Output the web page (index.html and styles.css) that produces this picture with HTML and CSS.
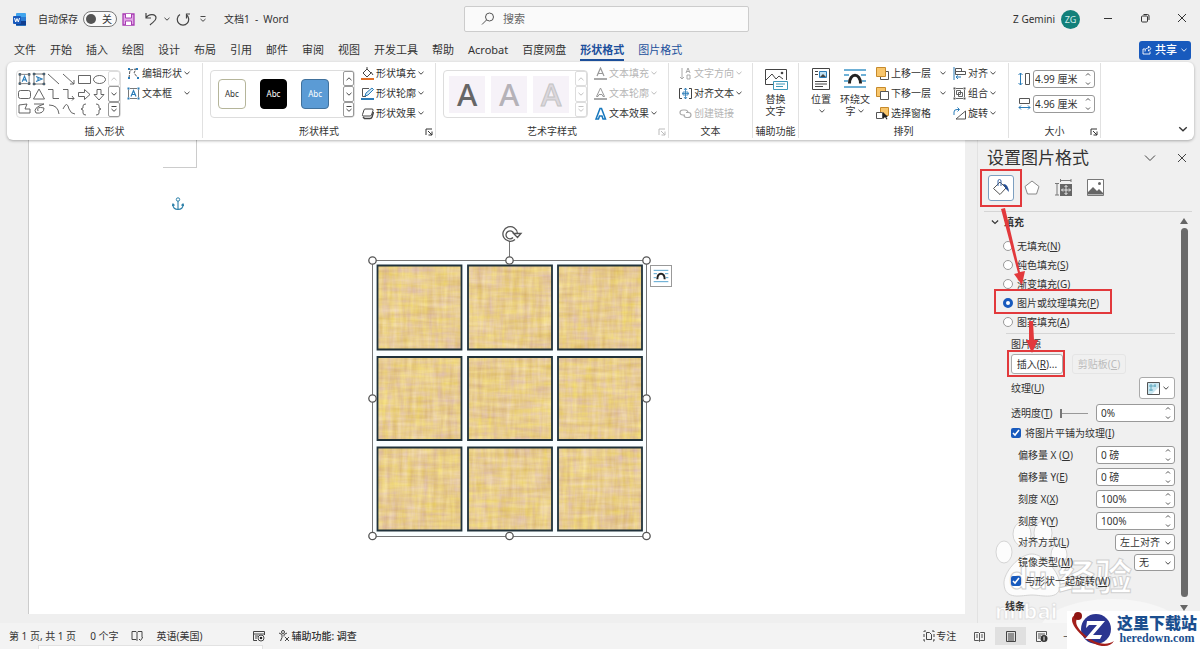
FILE: index.html
```html
<!DOCTYPE html>
<html lang="zh-CN">
<head>
  <meta charset="UTF-8">
  <meta name="viewport" content="width=device-width, initial-scale=1.0">
  <title>文档1 - Word</title>
  <link rel="stylesheet" href="styles.css">
</head>
<body>
  <!-- shared icons -->
  <svg class="defs" width="0" height="0">
    <symbol id="chev" viewBox="0 0 8 8"><path d="M1.5 2.800L4 5.200l2.500-2.400" fill="none" stroke="currentColor" stroke-width=".9"/></symbol>
    <symbol id="chev-up" viewBox="0 0 8 8"><path d="M1.500 5.200L4 2.800l2.500 2.400" fill="none" stroke="currentColor" stroke-width=".9"/></symbol>
    <symbol id="chev-bar" viewBox="0 0 8 8"><path d="M1.500 1.500h5M1.500 4L4 6.300 6.500 4" fill="none" stroke="currentColor" stroke-width=".9"/></symbol>
    <symbol id="launch" viewBox="0 0 8 8"><path d="M1 7V1h6M3 3l4 4M7 3.500V7H3.500" fill="none" stroke="currentColor"/></symbol>
    <symbol id="updown" viewBox="0 0 8 16"><path d="M2 4.500l2-2 2 2M2 11.500l2 2 2-2" fill="none" stroke="#555"/></symbol>
    <symbol id="textbox" viewBox="0 0 13 13"><path d="M1.500 2.500v8M11.500 2.500v8M3 1.500h7M3 11.500h7" stroke="#555" fill="none" stroke-width=".8"/><path d="M.5.500h2v2h-2zM10.500.500h2v2h-2zM.5 10.500h2v2h-2zM10.500 10.500h2v2h-2z" fill="#2b7cb8"/><path d="M4 9.500L6.500 3.500 9 9.500M5 7.500h3" stroke="#2b7cb8" stroke-width="1.200" fill="none"/></symbol>
    <symbol id="wrap" viewBox="0 0 24 20"><path d="M1 1.500h22M1 6.500h5M18 6.500h5M1 12.500h4M19 12.500h4M1 18.500h22" stroke="#3f97c9" stroke-width="1.300"/><path d="M6.500 15c0-11 11-11 11 0" stroke="#222" stroke-width="3" fill="none"/></symbol>
  </svg>

  <header class="titlebar">
    <div class="title-left">
      <svg class="word" width="13" height="13" viewBox="0 0 13 13"><rect x="3" width="10" height="13" rx="1" fill="#41a5ee"/><path d="M3 4h10v4H3z" fill="#2b7cd3"/><path d="M3 8h10v4.500H3z" fill="#103f91"/><rect y="3" width="8" height="8" rx="1" fill="#185abd"/><path d="M1.500 5l1.200 4L4 5.500 5.300 9l1.200-4" stroke="#fff" fill="none"/></svg>
      <span>自动保存</span>
      <button class="toggle" type="button"><i></i>关</button>
      <svg width="13" height="13" viewBox="0 0 13 13"><path d="M1 1h11v11H1z" fill="#e3a9e8" stroke="#a83cb3" stroke-width="1.300"/><path d="M3.500 1v4h6V1M3.500 12V8h6v4" fill="#fff" stroke="#a83cb3"/></svg>
      <svg class="undo" width="14" height="14" viewBox="0 0 14 14"><path d="M2 1v5h5M2 6c3-5 10-4 10 0 0 3-3 4-6 7" fill="none" stroke="#444" stroke-width="1.200"/></svg>
      <svg width="8" height="8"><use href="#chev"/></svg>
      <svg width="14" height="14" viewBox="0 0 14 14"><path d="M4 2.500a5.700 5.700 0 1 0 6 0M3.500 6.500V2H-1" fill="none" stroke="#444" stroke-width="1.200" transform="translate(14 0) scale(-1 1)"/></svg>
      <svg class="quick" width="8" height="8"><use href="#chev-bar"/></svg>
      <span class="doc-name">文档1&nbsp; -&nbsp; Word</span>
    </div>
    <label class="search">
      <svg width="14" height="14" viewBox="0 0 14 14"><circle cx="8.500" cy="5" r="4" fill="none" stroke="#555"/><path d="M5.500 8L1 12.500" stroke="#555"/></svg>
      <input type="text" placeholder="搜索" aria-label="搜索">
    </label>
    <div class="title-right">
      <span>Z Gemini</span>
      <span class="avatar">ZG</span>
      <button type="button" aria-label="最小化"><svg width="10" height="10" viewBox="0 0 10 10"><path d="M1 5.500h8" stroke="#333"/></svg></button>
      <button type="button" aria-label="还原"><svg width="10" height="10" viewBox="0 0 10 10"><rect x="1.500" y="3" width="6" height="6" rx="1" fill="none" stroke="#333"/><path d="M3.500 1.500h4q1.500 0 1.500 1.500v4" fill="none" stroke="#333"/></svg></button>
      <button type="button" aria-label="关闭"><svg width="10" height="10" viewBox="0 0 10 10"><path d="M1 1l8 8M9 1L1 9" stroke="#333"/></svg></button>
    </div>
  </header>

  <nav class="tabs">
    <a href="#">文件</a><a href="#">开始</a><a href="#">插入</a><a href="#">绘图</a><a href="#">设计</a><a href="#">布局</a><a href="#">引用</a><a href="#">邮件</a><a href="#">审阅</a><a href="#">视图</a><a href="#">开发工具</a><a href="#">帮助</a><a href="#">Acrobat</a><a href="#">百度网盘</a><a href="#" class="active">形状格式</a><a href="#" class="context">图片格式</a>
    <button class="share" type="button"><svg width="10" height="10" viewBox="0 0 10 10"><path d="M3.500 4H1v5h7V6.500M3 6.500c0-3 2-3.500 3.500-3.500V1L9 3.700 6.500 6V4.500" fill="none" stroke="#fff" stroke-width=".9"/></svg>共享<svg width="8" height="8"><use href="#chev"/></svg></button>
  </nav>

  <section class="ribbon">
    <div class="group g-insert">
      <div class="group-body">
        <div class="gallery shapes">
          <svg width="90" height="46" viewBox="0 0 90 46" fill="none" stroke="#555" stroke-width=".9">
            <use href="#textbox" x="1" y="2" width="13" height="12"/>
            <g transform="rotate(90 22 8)"><use href="#textbox" x="15.500" y="1.500" width="13" height="13"/></g>
            <path d="M31 3l11 10M46 3l11 10M57 9v4h-4M61.500 4.500h12v8h-12z"/><ellipse cx="82.500" cy="8.500" rx="6" ry="4"/>
            <rect x="1.500" y="19.500" width="12" height="8" rx="2"/><path d="M22 18l5.500 10h-11zM31 18.500h5v9h6M46 18.500h5v9h6M55 25l2 2.500-2 2M61.500 21.500h6v-3l5.500 5-5.500 5v-3h-6zM80 18.500v5h-3l5 5.500 5-5.500h-3v-5z"/>
            <path d="M2 42V34l8-1-2 5h5v4zM17 33h10q-12 4-8 9 8 1 8-5-8-2-6 3M32 34q9 0 10 9M46 38q4-9 6 0 2 5 6 5M69 33q-3 0-3 2v2l-2 1 2 1v3q0 2 3 2M79 33q3 0 3 2v2l2 1-2 1v3q0 2-3 2"/>
          </svg>
          <div class="scroller"><button class="off" aria-label="上"><svg><use href="#chev-up"/></svg></button><button aria-label="下"><svg><use href="#chev"/></svg></button><button aria-label="更多"><svg><use href="#chev-bar"/></svg></button></div>
        </div>
        <div class="tools">
          <button type="button"><svg class="ico" viewBox="0 0 13 13"><path d="M2 11L3 3l6-1-2 4 4 5" stroke="#555" fill="none" stroke-dasharray="3 1"/><path d="M1 1h2v2H1zM9 1h2v2H9zM1 10h2v2H1zM10 10h2v2h-2z" fill="#2b7cb8"/></svg>编辑形状<svg class="dd"><use href="#chev"/></svg></button>
          <button type="button"><svg class="ico"><use href="#textbox"/></svg>文本框<svg class="dd far"><use href="#chev"/></svg></button>
        </div>
      </div>
      <footer>插入形状</footer>
    </div>

    <div class="group g-style">
      <div class="group-body">
        <div class="gallery styles">
          <button class="swatch" type="button">Abc</button><button class="swatch black" type="button">Abc</button><button class="swatch blue" type="button">Abc</button>
          <div class="scroller"><button aria-label="上"><svg><use href="#chev-up"/></svg></button><button aria-label="下"><svg><use href="#chev"/></svg></button><button aria-label="更多"><svg><use href="#chev-bar"/></svg></button></div>
        </div>
        <div class="tools">
          <button type="button"><svg class="ico" viewBox="0 0 13 13"><path d="M6 2L2 6l4 4 4-4zM6 2V0M10 5l2 3" fill="none" stroke="#444"/><path d="M0 11h13v2H0z" fill="#e07028"/></svg>形状填充<svg class="dd"><use href="#chev"/></svg></button>
          <button type="button"><svg class="ico" viewBox="0 0 13 13"><path d="M8 1.500H1.500v8H5" fill="none" stroke="#555"/><path d="M4 9l1-3 6-5 1.500 1.500L7 8z" fill="#cfe7f5" stroke="#2b7cb8"/><path d="M0 11h13v2H0z" fill="#2b7cb8"/></svg>形状轮廓<svg class="dd"><use href="#chev"/></svg></button>
          <button type="button"><svg class="ico" viewBox="0 0 13 13"><path d="M4 2h7q1.500 0 1 1.500L10.500 8q-.5 1-1.500 1H2q-1 0-.5-1.500L3 3q.3-1 1-1z" fill="#fff" stroke="#444"/><path d="M2 10l1.500 1.500H9q1.500 0 2-1.500l1.500-5" fill="none" stroke="#444" stroke-width="1.500"/></svg>形状效果<svg class="dd"><use href="#chev"/></svg></button>
        </div>
      </div>
      <footer>形状样式<svg class="launch"><use href="#launch"/></svg></footer>
    </div>

    <div class="group g-art">
      <div class="group-body">
        <div class="gallery arts">
          <button class="art" type="button">A</button><button class="art light" type="button">A</button><button class="art outline" type="button">A</button>
          <div class="scroller disabled"><button aria-label="上"><svg><use href="#chev-up"/></svg></button><button aria-label="下"><svg><use href="#chev"/></svg></button><button aria-label="更多"><svg><use href="#chev-bar"/></svg></button></div>
        </div>
        <div class="tools">
          <button type="button" disabled><svg class="ico" viewBox="0 0 13 13"><path d="M3 9l3.500-8L10 9M4 6.500h5" fill="none" stroke="#999" stroke-width="1.200"/><path d="M0 11h13v2H0z" fill="#aaa"/></svg>文本填充<svg class="dd"><use href="#chev"/></svg></button>
          <button type="button" disabled><svg class="ico" viewBox="0 0 13 13"><path d="M2.500 9.500l4-8.500 4 8.500H9l-1-2H5l-1 2z" fill="none" stroke="#999"/><path d="M0 11h13v2H0z" fill="#aaa"/></svg>文本轮廓<svg class="dd"><use href="#chev"/></svg></button>
          <button type="button"><svg class="ico" viewBox="0 0 13 13"><path d="M2 12L6 1.500h1.500L11.500 12H9L8 9H5.500l-1 3z" fill="#fff" stroke="#1677bd" stroke-width="1.500"/></svg>文本效果<svg class="dd"><use href="#chev"/></svg></button>
        </div>
      </div>
      <footer>艺术字样式<svg class="launch off"><use href="#launch"/></svg></footer>
    </div>

    <div class="group g-text">
      <div class="group-body">
        <div class="tools">
          <button type="button" disabled><svg class="ico" viewBox="0 0 13 13"><path d="M3 1v11M1 10l2 2 2-2M7 6l2-5 2 5M7.500 4.500h3M8 8h3v4H8z" fill="none" stroke="#aaa"/></svg>文字方向<svg class="dd"><use href="#chev"/></svg></button>
          <button type="button"><svg class="ico" viewBox="0 0 13 13"><path d="M3 1.500H.5v10H3M10 1.500h2.500v10H10" fill="none" stroke="#444"/><path d="M6.500 1v11M3 6.500h7M5 3l1.500-2L8 3M5 10l1.500 2L8 10M4 5h5v3H4z" fill="none" stroke="#2b7cb8" stroke-width=".8"/></svg>对齐文本<svg class="dd"><use href="#chev"/></svg></button>
          <button type="button" disabled><svg class="ico" viewBox="0 0 13 13"><path d="M6 8H4Q1 8 1 5.500T4 3h2q3 0 3 3M7 5.500h2.500Q12 5.500 12 8t-3 2.500H7.500Q5 10.500 5 8" fill="none" stroke="#aaa" stroke-width="1.200"/></svg>创建链接</button>
        </div>
      </div>
      <footer>文本</footer>
    </div>

    <div class="group g-alt">
      <div class="group-body">
        <button class="big" type="button"><svg width="24" height="23" viewBox="0 0 24 23"><path d="M9 16.500H1.500v-15h21V12M2 12l6-6 4 5 3-3 4 3" fill="none" stroke="#444"/><circle cx="18" cy="5" r="1.300" fill="#444"/><path d="M9.500 13.500h14v8h-14zM12 16h9M12 18.500h7" fill="#fff" stroke="#3f97b8"/></svg>替换<br>文字</button>
      </div>
      <footer>辅助功能</footer>
    </div>

    <div class="group g-arrange">
      <div class="group-body">
        <button class="big" type="button"><svg width="18" height="23" viewBox="0 0 18 23"><path d="M.5.500h17v21H.5zM3 3.500h3M3 6.500h3M3 13.500h12M3 16h12M3 18.500h8" fill="none" stroke="#444"/><path d="M7.500 3.500h7v6h-7z" fill="#bfe0f2" stroke="#2b7cb8"/><path d="M8 9l3-3 3 3z" fill="#444"/></svg>位置<br><svg class="dd"><use href="#chev"/></svg></button>
        <button class="big" type="button"><svg width="24" height="23"><use href="#wrap" width="24" height="21"/></svg>环绕文<br>字<svg class="dd"><use href="#chev"/></svg></button>
        <div class="tools arrange">
          <button type="button"><svg class="ico" viewBox="0 0 13 13"><path d="M8 4.500h4.500v8h-8V9" fill="#fff" stroke="#555"/><path d="M.5.500h9v9h-9z" fill="#f8c66c" stroke="#c68a2c"/></svg>上移一层<svg class="dd far"><use href="#chev"/></svg></button>
          <button type="button"><svg class="ico" viewBox="0 0 13 13"><path d="M.5.500h9v9h-9z" fill="#f8c66c" stroke="#c68a2c"/><path d="M4.500 4.500h8v8h-8z" fill="#fff" stroke="#555"/></svg>下移一层<svg class="dd far"><use href="#chev"/></svg></button>
          <button type="button"><svg class="ico" viewBox="0 0 13 13"><path d="M4.500.500h8v8h-8z" fill="#f8c66c" stroke="#c68a2c"/><path d="M.5 5.500h6v6h-6z" fill="#fff" stroke="#555"/><path d="M7 5v7l2-2 1.500 2.500 1-.5L10.300 10H12z" fill="#222"/></svg>选择窗格</button>
        </div>
        <div class="tools">
          <button type="button"><svg class="ico" viewBox="0 0 13 13"><path d="M1 0v13" stroke="#2b7cb8"/><path d="M2.500 1.500h6v3h-6zM2.500 4.500h10v3h-10z" fill="none" stroke="#555"/><path d="M3 10h5M5 8.500L3 10l2 2" fill="none" stroke="#2b7cb8"/></svg>对齐<svg class="dd"><use href="#chev"/></svg></button>
          <button type="button"><svg class="ico" viewBox="0 0 13 13"><path d="M3.500 3.500h4v4h-4zM5.500 5.500h4v4h-4zM1.500 3v7M11.500 3v7M3 1.500h7M3 11.500h7" fill="none" stroke="#555" stroke-width=".9"/><path d="M.5.500h2v2h-2zM10.500.500h2v2h-2zM.5 10.500h2v2h-2zM10.500 10.500h2v2h-2z" fill="#555"/></svg>组合<svg class="dd"><use href="#chev"/></svg></button>
          <button type="button"><svg class="ico" viewBox="0 0 13 13"><path d="M12.500 4v8H3z" fill="none" stroke="#555"/><path d="M1 8V5q0-2.500 3-2.500h2M4.500.500l2 2-2 2" fill="none" stroke="#2b7cb8"/></svg>旋转<svg class="dd"><use href="#chev"/></svg></button>
        </div>
      </div>
      <footer>排列</footer>
    </div>

    <div class="group g-size">
      <div class="group-body size-body">
        <label><svg width="13" height="14" viewBox="0 0 13 14"><path d="M2.500 1v12M.5 3l2-2 2 2M.5 11l2 2 2-2" fill="none" stroke="#2b7cb8"/><path d="M7.500 1.500h4v11h-4z" fill="none" stroke="#555"/></svg><span class="spin"><input type="text" value="4.99 厘米" aria-label="高度"><svg><use href="#updown"/></svg></span></label>
        <label><svg width="13" height="14" viewBox="0 0 13 14"><path d="M1.500 1.500h10v5h-10z" fill="none" stroke="#555"/><path d="M1 10.500h11M3 8.500l-2 2 2 2M10 8.500l2 2-2 2" fill="none" stroke="#2b7cb8"/></svg><span class="spin"><input type="text" value="4.96 厘米" aria-label="宽度"><svg><use href="#updown"/></svg></span></label>
      </div>
      <footer>大小<svg class="launch"><use href="#launch"/></svg></footer>
    </div>
    <button class="collapse" type="button" aria-label="折叠"><svg width="12" height="12"><use href="#chev"/></svg></button>
  </section>

  <main class="workspace">
    <div class="page">
      <div class="crop-mark"></div>
      <svg class="anchor" width="12" height="14" viewBox="0 0 12 14"><circle cx="6" cy="2.500" r="1.700" fill="none" stroke="#2b7fa8"/><path d="M6 4v9M1 7.500Q1 12.500 6 12.500T11 7.500M0 9l1-2 1.500 1.500M12 9l-1-2-1.500 1.500" fill="none" stroke="#2b7fa8" stroke-width="1.100"/></svg>

      <!-- nine-square shape with woven texture, selection frame and handles -->
      <svg class="shape" width="284" height="320" viewBox="0 0 284 320">
        <defs>
          <filter id="weave" x="0" y="0" width="100%" height="100%" color-interpolation-filters="sRGB">
            <feTurbulence type="fractalNoise" baseFrequency="0.03 0.2" numOctaves="3" seed="4" result="h"/>
            <feColorMatrix in="h" values="0.2 0 0 0 0.81  0.3 0 0 0 0.65  0.1 0.5 0 0 0.26  0 0 0 0 1" result="hc"/>
            <feTurbulence type="fractalNoise" baseFrequency="0.2 0.03" numOctaves="3" seed="9" result="v"/>
            <feColorMatrix in="v" values="0.2 0 0 0 0.81  0.3 0 0 0 0.65  0.1 0.5 0 0 0.26  0 0 0 0 1" result="vc"/>
            <feComposite in="hc" in2="vc" operator="arithmetic" k2="0.5" k3="0.5"/>
            <feComposite in2="SourceGraphic" operator="in"/>
          </filter>
        </defs>
        <path d="M5 32.500h274v276H5z" fill="#fafeff"/>
        <path d="M9 37h85v85H9zM100 37h84v85h-84zM190 37h84v85h-84zM9 129h84v83H9zM100 129h84v83h-84zM190 129h84v83h-84zM9 219h84v84H9zM100 219h84v84h-84zM190 219h84v84h-84z" filter="url(#weave)"/>
        <path d="M9.500 37.500h84v84h-84zM100 37.500h84v84h-84zM190 37.500h84v84h-84zM9.500 129h84v83h-84zM100 129h84v83h-84zM190 129h84v83h-84zM9.500 219.500h84v83h-84zM100 219.500h84v83h-84zM190 219.500h84v83h-84z" fill="none" stroke="#20323b" stroke-width="1.800"/>
        <path d="M4.500 32.500h274v276h-274zM141.500 32V12" fill="none" stroke="#777"/>
        <g fill="#fff" stroke="#555" stroke-width="1.300"><circle cx="4.500" cy="32.500" r="3.700"/><circle cx="141.500" cy="32.500" r="3.700"/><circle cx="278.500" cy="32.500" r="3.700"/><circle cx="4.500" cy="170.500" r="3.700"/><circle cx="278.500" cy="170.500" r="3.700"/><circle cx="4.500" cy="308" r="3.700"/><circle cx="141.500" cy="308" r="3.700"/><circle cx="278.500" cy="308" r="3.700"/></g>
        <circle cx="142" cy="6" r="7" fill="#fff"/>
        <path d="M147 11.500a7.300 7.300 0 1 1 2.500-6M145 9.500a4 4 0 1 1 .8-4M145.500 5.500h7.500l-3.500 4z" fill="none" stroke="#555" stroke-width="1.300"/>
      </svg>
      <button class="layout-btn" type="button" aria-label="布局选项"><svg width="16" height="14"><use href="#wrap"/></svg></button>
    </div>

    <aside class="pane">
      <svg class="watermark" width="190" height="112" viewBox="0 0 190 112">
        <ellipse cx="118" cy="112" rx="72" ry="32" fill="#f7f7f7"/>
        <g fill="#fff" fill-opacity=".8" stroke="#ccc" stroke-opacity=".8"><ellipse cx="28" cy="15" rx="9" ry="12"/><ellipse cx="49" cy="14" rx="9" ry="12"/><ellipse cx="10" cy="33" rx="8" ry="11"/><ellipse cx="65" cy="36" rx="8" ry="11"/><path d="M38 35C25 35 9 54 10 65c1 17 18 11 28 11s28 6 28-10C66 54 50 35 38 35z"/></g>
        <text x="15" y="70" class="wm-du">du</text>
        <text x="64" y="72" class="wm-name">经验</text>
        <text x="1" y="100" class="wm-url">nhbai</text>
      </svg>
      <div class="pane-head">
        <h2>设置图片格式</h2>
        <button type="button" aria-label="选项"><svg width="12" height="12" viewBox="0 0 12 12"><path d="M1 3.500l5 5 5-5" fill="none" stroke="#444"/></svg></button>
        <button type="button" aria-label="关闭窗格"><svg width="10" height="10" viewBox="0 0 10 10"><path d="M1 1l8 8M9 1L1 9" stroke="#444"/></svg></button>
      </div>
      <div class="pane-tabs">
        <button class="current" type="button" aria-label="填充与线条"><svg width="18" height="17" viewBox="0 0 18 17"><path d="M8 3L1.500 9.500 8 15.500l6-6.500z" fill="#fff" stroke="#555"/><path d="M6 7V2q0-1.500 1.500-1.500T9 2v5" fill="none" stroke="#3c68a8"/><path d="M11 5q5-.5 6 8l-3-3z" fill="#244f96"/></svg></button>
        <button type="button" aria-label="效果"><svg width="16" height="16" viewBox="0 0 16 16"><path d="M8 1l7 5.500L12.500 14h-9L1 6.500z" fill="#fff" stroke="#888"/></svg></button>
        <button type="button" aria-label="布局属性"><svg width="17" height="17" viewBox="0 0 17 17"><path d="M2 4v12M0 4.500h4M0 16h4M5 1.500h11M5.500 0v3M16 0v3" stroke="#777"/><path d="M5 5h12v12H5z" fill="#666"/><path d="M11 6.500v9M6.500 11h9M9.500 8L11 6.500 12.500 8M9.500 14l1.500 1.500 1.500-1.500M8 9.500L6.500 11 8 12.500M14 9.500l1.500 1.500-1.500 1.500" stroke="#fff" fill="none" stroke-width=".8"/></svg></button>
        <button type="button" aria-label="图片"><svg width="17" height="17" viewBox="0 0 17 17"><path d="M.5.500h16v16H.5z" fill="#fff" stroke="#777"/><path d="M1 15.500V13l5-5 4 4 2-2 4 4v1.500z" fill="#666"/><circle cx="12.500" cy="4.500" r="1.500" fill="#666"/></svg></button>
      </div>
      <div class="pane-main">
        <form class="options">
          <h3><svg width="10" height="10"><use href="#chev"/></svg>填充</h3>
          <div class="radios">
            <label><input type="radio" name="fill"><span>无填充(<u>N</u>)</span></label>
            <label><input type="radio" name="fill"><span>纯色填充(<u>S</u>)</span></label>
            <label><input type="radio" name="fill"><span>渐变填充(<u>G</u>)</span></label>
            <label><input type="radio" name="fill" checked><span>图片或纹理填充(<u>P</u>)</span></label>
            <label><input type="radio" name="fill"><span>图案填充(<u>A</u>)</span></label>
          </div>
          <div class="source">
            <p>图片源</p>
            <div class="source-btns"><button type="button">插入(<u>R</u>)...</button><button type="button" disabled>剪贴板(<u>C</u>)</button></div>
          </div>
          <div class="row texture"><span>纹理(<u>U</u>)</span><button type="button" aria-label="纹理"><svg width="13" height="13" viewBox="0 0 13 13"><path d="M.5.500h12v12H.5z" fill="#c9e6f0" stroke="#555"/><path d="M2 4h7M2 8h4M4 2v7M8 2v3" stroke="#4b9db5" stroke-width=".8"/><path d="M12 5v7H5z" fill="#fff"/></svg><svg width="8" height="8"><use href="#chev"/></svg></button></div>
          <div class="row"><label for="alpha">透明度(<u>T</u>)</label><i class="slider"></i><span class="spin"><input id="alpha" type="text" value="0%"><svg><use href="#updown"/></svg></span></div>
          <label class="check"><input type="checkbox" checked><span>将图片平铺为纹理(<u>I</u>)</span></label>
          <div class="tiling">
            <div class="row"><label for="ox">偏移量 X (<u>O</u>)</label><span class="spin"><input id="ox" type="text" value="0 磅"><svg><use href="#updown"/></svg></span></div>
            <div class="row"><label for="oy">偏移量 Y(<u>E</u>)</label><span class="spin"><input id="oy" type="text" value="0 磅"><svg><use href="#updown"/></svg></span></div>
            <div class="row"><label for="sx">刻度 X(<u>X</u>)</label><span class="spin"><input id="sx" type="text" value="100%"><svg><use href="#updown"/></svg></span></div>
            <div class="row"><label for="sy">刻度 Y(<u>Y</u>)</label><span class="spin"><input id="sy" type="text" value="100%"><svg><use href="#updown"/></svg></span></div>
            <div class="row short"><label for="al">对齐方式(<u>L</u>)</label><span class="pick"><select id="al"><option>左上对齐</option></select><svg><use href="#chev"/></svg></span></div>
            <div class="row short"><label for="mi">镜像类型(<u>M</u>)</label><span class="pick narrow"><select id="mi"><option>无</option></select><svg><use href="#chev"/></svg></span></div>
          </div>
          <label class="check"><input type="checkbox" checked><span>与形状一起旋转(<u>W</u>)</span></label>
          <h3 class="line-head">线条</h3>
        </form>
        <div class="scrollbar"><i class="up"></i><i class="thumb"></i><i class="down"></i></div>
      </div>

      <svg class="marks" width="222" height="250" viewBox="0 0 222 250">
        <g fill="none" stroke="#e2393c" stroke-width="2"><path d="M3 30h40v36H3zM17 150h116v23H17zM30 211h56v25H30z"/></g>
        <path d="M23 69l4-1 15 64 5-1-3 14-8-11 4-1zM51 181h4l1 19h4l-6 13-6-13h3z" fill="#e2393c"/>
      </svg>
    </aside>
  </main>

  <footer class="status">
    <span class="pages">第 1 页, 共 1 页</span>
    <span class="words">0 个字</span>
    <svg class="proof" width="12" height="12" viewBox="0 0 12 12"><path d="M1 1.500h4l1 1 1-1h4v6M6 2.500v8M1 1.500v8h4l1 1M8 9l1.500 1.500L12 7" fill="none" stroke="#444"/></svg>
    <span class="lang">英语(美国)</span>
    <svg class="macro" width="12" height="12" viewBox="0 0 12 12"><path d="M4 10.500H.5v-9h11V5M.5 4h11M2 6h3M2 8h2" fill="none" stroke="#444"/><circle cx="8" cy="8" r="3" fill="#fff" stroke="#444"/><circle cx="8" cy="8" r="1.300" fill="#222"/></svg>
    <svg width="12" height="12" viewBox="0 0 12 12"><circle cx="5" cy="2" r="1.500" fill="none" stroke="#444"/><path d="M1 3l3 1.500v3L2.500 11M9 3L6 4.500v2M7 7l4 4M11 7l-4 4" fill="none" stroke="#444"/></svg>
    <span class="access">辅助功能: 调查</span>
    <div class="views">
      <svg width="12" height="12" viewBox="0 0 12 12"><path d="M3 1H1v10h2M9 1h2v10H9" fill="none" stroke="#444" stroke-dasharray="3 2"/><path d="M3.500 2.500h3l2 2v5h-5z" fill="none" stroke="#444"/></svg>
      <span>专注</span>
      <button type="button" aria-label="阅读视图"><svg width="11" height="11" viewBox="0 0 11 11"><path d="M.5 1.500h4l1 1 1-1h4v8h-4l-1 1-1-1h-4zM5.500 2v8M2 4h2M2 6h2M7 4h2M7 6h2" fill="none" stroke="#555"/></svg></button>
      <button class="on" type="button" aria-label="页面视图"><svg width="10" height="11" viewBox="0 0 10 11"><path d="M.5.500h9v10h-9zM2 3h6M2 5h6M2 7h6M2 9h6" fill="#ddd" stroke="#444"/></svg></button>
      <button type="button" aria-label="Web 视图"><svg width="12" height="11" viewBox="0 0 12 11"><path d="M5 10.500H.5V.500h10V4M2 3h7M2 5h3M2 7h2" fill="none" stroke="#555"/><circle cx="8" cy="7.500" r="3.500" fill="#333"/><path d="M8 5.500v4" stroke="#fff"/></svg></button>
      <span class="minus">−</span>
    </div>
    <div class="taskbar-edge"></div>
  </footer>

  <div class="site-badge">
    <svg width="48" height="38" viewBox="0 0 48 38"><circle cx="29" cy="18" r="15" fill="#2b3590"/><path d="M14 3C-2 3 6 17 17 26c10 9 25 13 30 4-9 6-21 1-29-6C7 15 7 8 14 3z" fill="#a3201c"/><circle cx="11" cy="5" r="4" fill="#8e1512"/><path d="M20 10h18L26 24h9l-2 4H18l12-14h-8l-3 3z" fill="#fff"/></svg>
    <div><strong>这里下载站</strong><span>heredown.com</span></div>
  </div>
</body>
</html>
```
FILE: styles.css
```css
* {
  box-sizing: border-box;
}

body {
  margin: 0;
  height: 100vh;
  display: flex;
  flex-direction: column;
  overflow: hidden;
  background: #efefef;
  color: #333;
  font: 10px/12px "Noto Sans", "Noto Sans CJK SC", sans-serif;
}

button, input, select {
  font: inherit;
  color: inherit;
  margin: 0;
  padding: 0;
  border: none;
  background: none;
}

a {
  color: inherit;
  text-decoration: none;
}

svg {
  flex: none;
}

.defs {
  position: absolute;
}

/* title bar */
.titlebar {
  display: flex;
  align-items: center;
  height: 38px;
  padding-left: 13px;
}

.title-left, .title-right {
  flex: 1;
  display: flex;
  align-items: center;
  white-space: nowrap;
}

.title-left {
  gap: 5px;
}

.word {
  margin-right: 7px;
}

.toggle {
  display: flex;
  align-items: center;
  justify-content: space-between;
  width: 34px;
  height: 16px;
  padding: 0 4px 0 2px;
  border: 1px solid #777;
  border-radius: 8px;
  background: #fafafa;
}

.toggle i {
  width: 10px;
  height: 10px;
  border-radius: 50%;
  background: #555;
}

.undo {
  margin-left: 4px;
}

.quick {
  margin-left: 4px;
}

.doc-name {
  margin-left: 12px;
}

.search {
  display: flex;
  align-items: center;
  gap: 8px;
  width: 24%;
  height: 26px;
  padding-left: 16px;
  background: #fafafa;
  border: 1px solid #ccc;
  border-radius: 2px;
}

.search input {
  flex: 1;
  font-size: 11px;
  outline: none;
}

.search input::placeholder {
  color: #666;
}

.title-right {
  justify-content: flex-end;
}

.title-right button {
  width: 37px;
  height: 20px;
}

.avatar {
  width: 19px;
  height: 19px;
  margin: 0 9px 0 6px;
  border-radius: 50%;
  background: #12807a;
  color: #d5efec;
  font-size: 9px;
  line-height: 19px;
  text-align: center;
}

/* ribbon tabs */
.tabs {
  display: flex;
  align-items: center;
  gap: 14px;
  height: 24px;
  padding: 0 9px 0 14px;
  font-size: 11px;
  white-space: nowrap;
}

.tabs a {
  height: 22px;
  line-height: 22px;
}

.tabs .active {
  color: #1c4f9c;
  font-weight: bold;
  border-bottom: 2px solid #1c4f9c;
}

.tabs .context {
  color: #1c4f9c;
}

.share {
  display: flex;
  align-items: center;
  gap: 3px;
  height: 19px;
  margin-left: auto;
  padding: 0 3px;
  border-radius: 3px;
  background: #185abd;
  color: #fff;
  font-weight: 500;
}

/* ribbon */
.ribbon {
  position: relative;
  z-index: 2;
  display: flex;
  height: 78px;
  margin: 0 6px 0 7px;
  background: #fff;
  border-radius: 6px;
  box-shadow: 0 1px 3px rgba(0, 0, 0, 0.3);
  white-space: nowrap;
}

.group {
  display: flex;
  flex-direction: column;
  flex: none;
  margin: 1px 0 2px;
  border-right: 1px solid #e1e1e1;
}

.g-insert { width: 196px; }
.g-style { width: 233px; }
.g-art { width: 233px; }
.g-text { width: 84px; }
.g-alt { width: 46px; }
.g-arrange { width: 210px; }
.g-size { width: 92px; }

.group-body {
  display: flex;
  flex: 1;
  min-height: 0;
  align-items: flex-start;
  padding: 0 0 0 9px;
}

.group footer {
  position: relative;
  height: 14px;
  line-height: 14px;
  text-align: center;
}

.launch {
  position: absolute;
  right: 2px;
  bottom: 2px;
  width: 8px;
  height: 8px;
}

.launch.off {
  color: #bbb;
}

.gallery {
  display: flex;
  align-items: center;
  height: 48px;
  margin-top: 7px;
  border: 1px solid #ddd;
  border-radius: 4px;
  background: #fff;
}

.g-style .group-body, .g-art .group-body {
  padding-left: 7px;
}

.shapes {
  width: 105px;
  justify-content: space-between;
}

.styles, .arts {
  width: 145px;
}

.styles {
  gap: 14px;
  padding-left: 7px;
}

.arts {
  gap: 6px;
  padding-left: 5px;
}

.scroller {
  width: 12px;
  height: 100%;
  margin-left: auto;
  display: flex;
  flex-direction: column;
}

.scroller button {
  flex: 1;
  display: flex;
  align-items: center;
  justify-content: center;
  border: 1px solid #999;
  border-radius: 2px;
}

.scroller .off, .scroller.disabled button {
  border-color: #ddd;
  color: #bbb;
}

.scroller svg {
  width: 8px;
  height: 8px;
}

.swatch {
  width: 30px;
  height: 30px;
  border: 1px solid #b5b59a;
  border-radius: 4px;
  font-size: 8px;
}

.swatch.black {
  background: #000;
  border-color: #000;
  color: #fff;
}

.swatch.blue {
  background: #5b9bd5;
  border-color: #41719c;
  color: #fff;
}

.art {
  width: 37px;
  height: 37px;
  background: #f6f2f8;
  color: #666;
  font-size: 31px;
  font-weight: 500;
  line-height: 37px;
}

.art.light {
  color: #b5b2b8;
}

.art.outline {
  color: #dcd8de;
  -webkit-text-stroke: 1px #c4c4c4;
}

.tools {
  margin-left: 6px;
}

.g-text .tools {
  margin-left: 1px;
}

.tools button {
  display: flex;
  align-items: center;
  width: 100%;
  height: 20px;
}

.tools button:disabled {
  color: #b5b5b5;
}

.ico {
  width: 13px;
  height: 13px;
  margin-right: 2px;
}

.dd {
  width: 8px;
  height: 8px;
  margin-left: 1px;
}

.dd.far {
  margin-left: auto;
}

.arrange {
  width: 71px;
}

.big {
  line-height: 12px;
  padding-top: 5px;
  text-align: center;
}

.big > svg:first-child {
  display: block;
  margin: 0 auto 2px;
}

.g-alt .group-body {
  padding: 0;
  justify-content: center;
}

.g-arrange .group-body {
  padding-left: 12px;
}

.g-arrange .big + .big {
  margin-left: 9px;
}

.size-body {
  flex-direction: column;
  gap: 7px;
}

.size-body label {
  display: flex;
  align-items: center;
  gap: 2px;
}

.size-body label:first-child {
  margin-top: 7px;
}

.spin {
  display: flex;
  align-items: center;
  width: 79px;
  height: 18px;
  border: 1px solid #999;
  border-radius: 3px;
  background: #fff;
}

.spin input {
  flex: 1;
  min-width: 0;
  padding-left: 4px;
}

.spin svg {
  width: 8px;
  height: 16px;
  margin-right: 2px;
}

.size-body .spin {
  width: 62px;
}

.size-body .spin input {
  padding-left: 1px;
}

.collapse {
  align-self: flex-end;
  height: 20px;
  margin: 0 5px 0 auto;
}

/* document */
.workspace {
  flex: 1;
  display: flex;
  min-height: 0;
}

.page {
  position: relative;
  flex: 1;
  margin: 0 12px 9px 28px;
  background: #fff;
  border-left: 1px solid #ccc;
}

.crop-mark {
  position: absolute;
  left: 134px;
  top: 0;
  width: 34px;
  height: 28px;
  border: solid #ccc;
  border-width: 0 1px 1px 0;
}

.anchor {
  position: absolute;
  left: 143px;
  top: 57px;
}

.shape {
  position: absolute;
  left: 339px;
  top: 88px;
  overflow: visible;
}

.layout-btn {
  position: absolute;
  left: 621px;
  top: 125px;
  width: 22px;
  height: 22px;
  display: flex;
  align-items: center;
  justify-content: center;
  border: 1px solid #999;
  background: #fff;
}

/* format pane */
.pane {
  position: relative;
  width: 223px;
  display: flex;
  flex-direction: column;
  background: #f0f0f0;
  border-left: 1px solid #e2e2e2;
}

.pane-head {
  display: flex;
  align-items: center;
  height: 35px;
  padding: 1px 9px 0;
}

.pane-head h2 {
  flex: 1;
  margin: 0;
  font-size: 17px;
  font-weight: normal;
  line-height: 24px;
}

.pane-head button {
  margin-left: 16px;
  line-height: 0;
}

.pane-head button + button {
  margin-left: 21px;
  margin-right: 4px;
}

.pane-tabs {
  display: flex;
  align-items: center;
  gap: 15px;
  height: 37px;
  margin: 0 8px 0 6px;
  padding: 0 0 11px 4px;
  border-bottom: 1px solid #d5d5d5;
}

.pane-tabs button {
  line-height: 0;
}

.pane-tabs .current {
  width: 26px;
  height: 26px;
  margin-right: -5px;
  border: 1px solid #7d9fc0;
  border-radius: 3px;
  background: #fff;
}

.pane-main {
  position: relative;
  flex: 1;
  display: flex;
  min-height: 0;
}

.options {
  flex: 1;
  min-width: 0;
  overflow: hidden;
  padding-left: 12px;
}

.options h3 {
  display: flex;
  align-items: center;
  gap: 4px;
  margin: 0;
  height: 20px;
  font-size: 10px;
}

.radios {
  margin-left: 13px;
  padding: 4px 0 2px;
}

.radios label {
  display: flex;
  align-items: center;
  gap: 4px;
  height: 19px;
}

input[type="radio"] {
  appearance: none;
  width: 10px;
  height: 10px;
  border: 1px solid #999;
  border-radius: 50%;
  background: #fff;
}

input[type="radio"]:checked {
  border: 3px solid #185abd;
}

.source {
  margin: 0 1px 0 16px;
  border-top: 1px solid #d5d5d5;
}

.source p {
  margin: 0 5px;
  line-height: 20px;
}

.source-btns {
  display: flex;
  gap: 9px;
  margin-left: 5px;
}

.source-btns button {
  width: 52px;
  height: 20px;
  border: 1px solid #aaa;
  border-radius: 3px;
  background: #fff;
}

.source-btns button:disabled {
  width: 54px;
  border-color: #e5e5e5;
  background: none;
  color: #bbb;
}

.row {
  display: flex;
  align-items: center;
  justify-content: space-between;
  height: 22px;
  margin: 0 1px 0 21px;
}

.texture {
  height: 28px;
}

.texture button {
  display: flex;
  align-items: center;
  justify-content: space-between;
  width: 36px;
  height: 22px;
  padding: 0 4px 0 7px;
  border: 1px solid #aaa;
  border-radius: 3px;
  background: #fff;
}

.slider {
  width: 28px;
  height: 9px;
  border-left: 2px solid #777;
  background: linear-gradient(#999, #999) center / 100% 1px no-repeat;
}

.check {
  display: flex;
  align-items: center;
  gap: 4px;
  height: 18px;
  margin-left: 21px;
}

input[type="checkbox"] {
  width: 10px;
  height: 10px;
  accent-color: #185abd;
}

.tiling {
  padding: 2px 0 0 8px;
}

.tiling .row {
  margin-left: 20px;
}

.tiling .short {
  height: 20px;
}

.pick {
  position: relative;
  width: 60px;
}

.pick.narrow {
  width: 41px;
}

.pick select {
  appearance: none;
  display: block;
  width: 100%;
  height: 17px;
  padding-left: 4px;
  border: 1px solid #999;
  border-radius: 3px;
  background: #fff;
}

.pick svg {
  position: absolute;
  right: 3px;
  top: 5px;
  width: 8px;
  height: 8px;
}

.options .line-head {
  margin: 6px 0 0 15px;
}

.scrollbar {
  display: flex;
  flex-direction: column;
  align-items: center;
  gap: 4px;
  width: 8px;
  margin: 6px 12px 12px 4px;
}

.scrollbar i {
  border: 4px solid transparent;
}

.scrollbar .up {
  border-top: 0;
  border-bottom: 6px solid #666;
}

.scrollbar .down {
  border-bottom: 0;
  border-top: 6px solid #666;
  margin-top: 4px;
}

.scrollbar .thumb {
  flex: 1;
  width: 7px;
  border: 0;
  border-radius: 4px;
  background: #6a6a6a;
}

.marks {
  position: absolute;
  left: 0;
  top: 0;
}

.watermark {
  position: absolute;
  left: 16px;
  bottom: -8px;
}

.watermark text {
  fill: #fff;
  stroke: #d0d0d0;
  stroke-width: 1px;
  font-weight: bold;
}

.watermark .wm-du {
  font-size: 30px;
}

.watermark .wm-name {
  font-size: 37px;
}

.watermark .wm-url {
  font-size: 22px;
  stroke: #e2e2e2;
}

/* status bar */
.status {
  position: relative;
  display: flex;
  align-items: center;
  height: 26px;
  padding: 0 131px 0 9px;
  background: #f3f3f3;
  white-space: nowrap;
}

.words {
  margin-left: 14px;
}

.proof {
  margin: 0 13px;
}

.macro {
  margin: 0 13px 0 51px;
}

.access {
  margin-left: 1px;
  font-weight: 500;
}

.views {
  display: flex;
  align-items: center;
  margin-left: auto;
}

.views button {
  display: flex;
  align-items: center;
  justify-content: center;
  width: 31px;
  height: 18px;
}

.views span {
  margin: 0 8px 0 1px;
}

.views .on {
  background: #e0e0e0;
}

.views .minus {
  margin: 0 0 0 6px;
}

.taskbar-edge {
  position: absolute;
  left: 38px;
  bottom: 0;
  width: 225px;
  height: 4px;
  background: #fff;
  border: 1px solid #e2e2e2;
  border-bottom: none;
}

.site-badge {
  position: absolute;
  right: 0;
  bottom: 0;
  z-index: 3;
  display: flex;
  gap: 2px;
  width: 133px;
  height: 38px;
  background: #fff;
  color: #1b4f8f;
  font-family: "Liberation Serif", "Noto Sans CJK SC", serif;
  font-weight: bold;
}

.site-badge div {
  padding-top: 5px;
}

.site-badge strong {
  display: block;
  font-size: 16px;
  line-height: 16px;
}

.site-badge span {
  display: block;
  font-size: 12px;
  line-height: 12px;
  text-align: center;
}
```
